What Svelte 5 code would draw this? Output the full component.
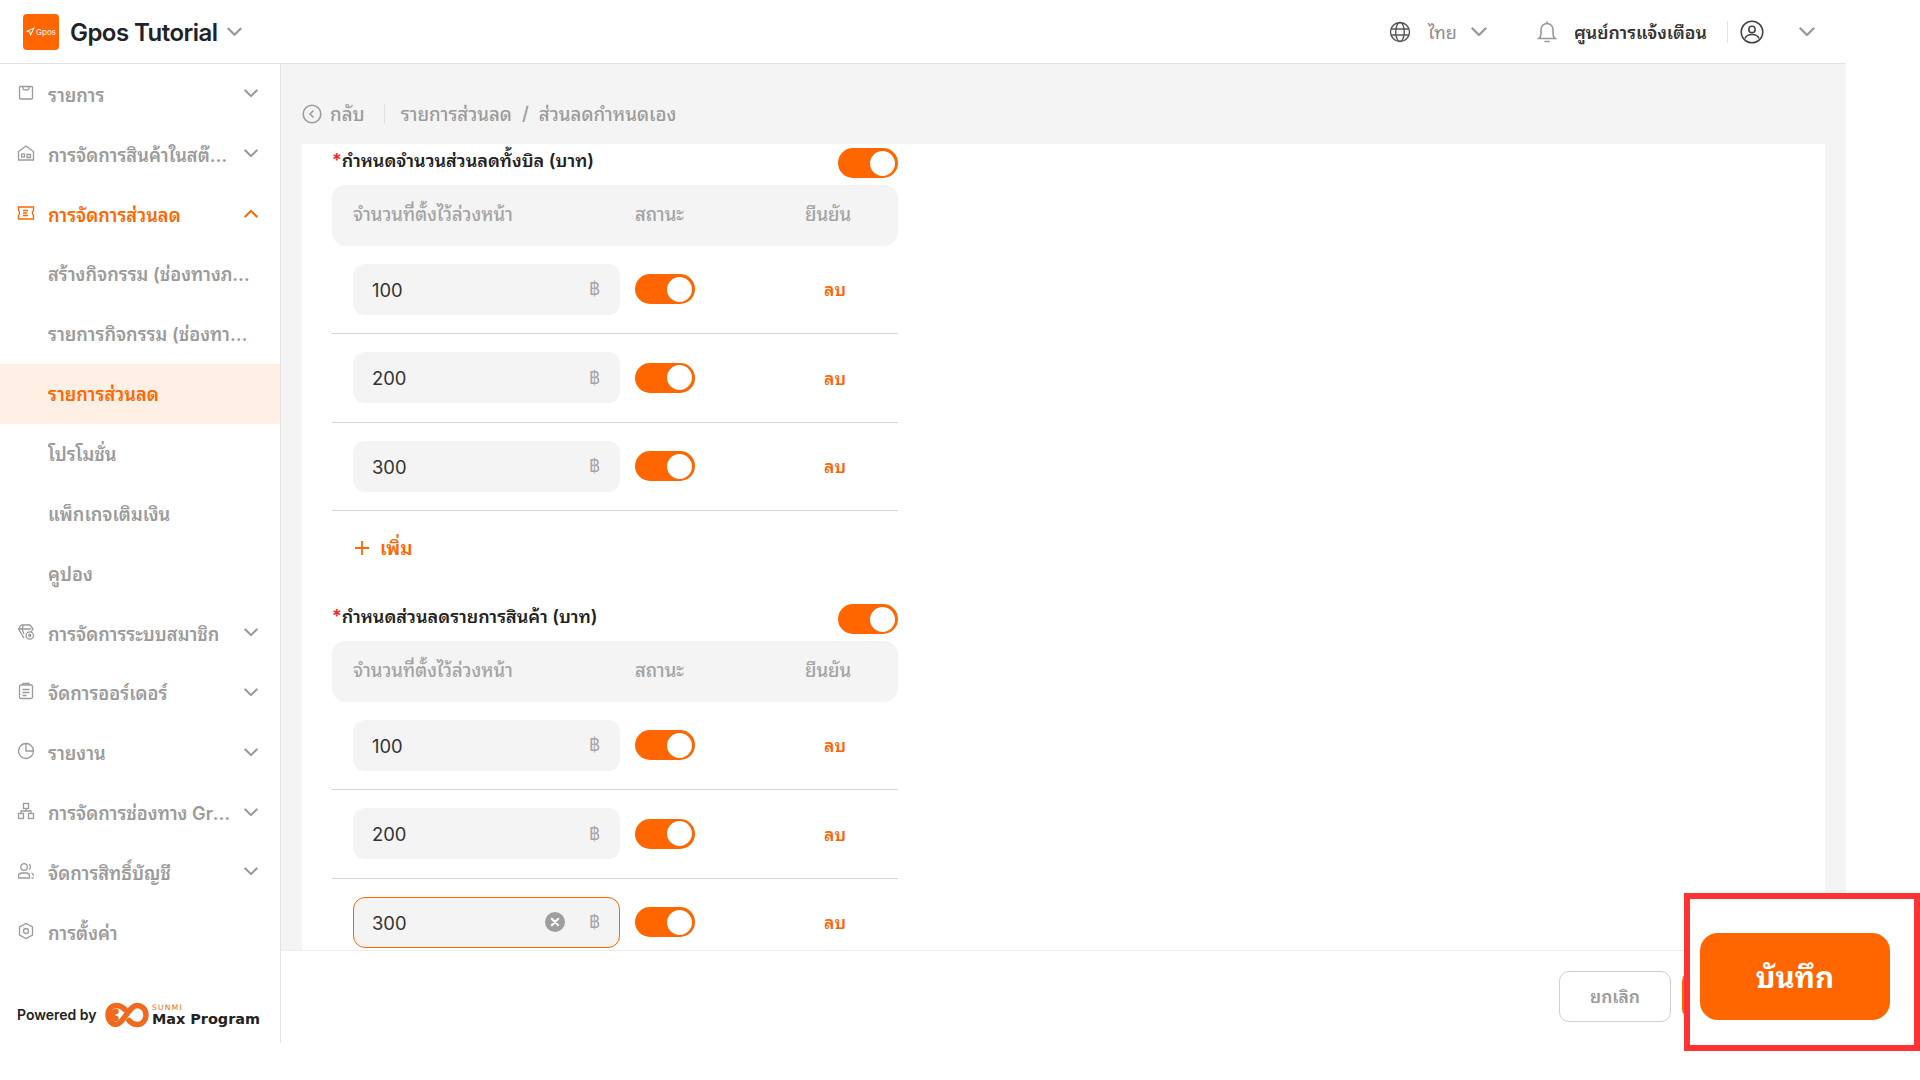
<script>
  const icons = {
    box: '<rect x="2.500" y="2.500" width="13" height="12.500" rx="1"/><path d="M6 2.500v2.200c0 1.700 6 1.700 6 0V2.500"/>',
    store: '<path d="M1.500 16V7.500L9 2l7.500 5.500V16z"/><rect x="4.500" y="10" width="3" height="3"/><path d="M10 10.500h3.500v3H10z"/>',
    ticket: '<path d="M1.500 3h15v3.500c-1.500.6-1.500 3.900 0 5V15h-15v-3.500c1.300-.8 1.300-4 0-5z"/><path d="M6 6.500h5M6 9h4M6 11.500h5"/>',
    gem: '<path d="M4 2h9l3 4-2 3M4 2 1.500 6 7 15M1.500 6H14M6.500 2 5 6l2 5"/><circle cx="12.800" cy="12.500" r="3.700"/><circle cx="12.800" cy="12.500" r="1"/>',
    clip: '<rect x="2.500" y="3" width="13" height="13.500" rx="1.500"/><path d="M6 3V1.500h6V3M5.500 7.500h7M5.500 10.500h7M5.500 13.500h4"/>',
    pie: '<path d="M9 1.500a7.500 7.500 0 1 0 7.500 7.500H9z"/><path d="M9 1.500a7.500 7.500 0 0 1 7.500 7.500"/>',
    tree: '<rect x="6.500" y="1.500" width="5" height="5"/><rect x="1.500" y="11.500" width="5" height="5"/><rect x="11.500" y="11.500" width="5" height="5"/><path d="M9 6.500V9M4 11.500V9h10v2.500"/>',
    users: '<circle cx="7" cy="5" r="3.300"/><path d="M1.500 16v-1.500c0-2 1.500-3.500 3.500-3.500h4c2 0 3.500 1.500 3.500 3.500V16zM12 2.500c2 .5 2 4 0 5M14.500 11c1.300.5 2 1.500 2 3M14.500 16h2"/>',
    gear: '<path d="M9 1.500 15.500 5v8L9 16.500 2.500 13V5z"/><circle cx="9" cy="9" r="2.500"/>'
  };
  const menu = [
    { t: 'รายการ', i: 'box', c: 'down' },
    { t: 'การจัดการสินค้าในสต๊อกของร้าน', i: 'store', c: 'down' },
    { t: 'การจัดการส่วนลด', i: 'ticket', c: 'up', open: true },
    { t: 'สร้างกิจกรรม (ช่องทางภายนอกร้าน)', sub: true },
    { t: 'รายการกิจกรรม (ช่องทางภายนอก)', sub: true },
    { t: 'รายการส่วนลด', sub: true, on: true },
    { t: 'โปรโมชั่น', sub: true },
    { t: 'แพ็กเกจเติมเงิน', sub: true },
    { t: 'คูปอง', sub: true },
    { t: 'การจัดการระบบสมาชิก', i: 'gem', c: 'down' },
    { t: 'จัดการออร์เดอร์', i: 'clip', c: 'down' },
    { t: 'รายงาน', i: 'pie', c: 'down' },
    { t: 'การจัดการช่องทาง Grab Food', i: 'tree', c: 'down' },
    { t: 'จัดการสิทธิ์บัญชี', i: 'users', c: 'down' },
    { t: 'การตั้งค่า', i: 'gear' }
  ];
  const sections = [
    { title: 'กำหนดจำนวนส่วนลดทั้งบิล (บาท)', rows: [{ v: '100' }, { v: '200' }, { v: '300' }], add: true },
    { title: 'กำหนดส่วนลดรายการสินค้า (บาท)', rows: [{ v: '100' }, { v: '200' }, { v: '300', focus: true }] }
  ];
</script>

{#snippet chev(cls)}
  <svg class="chev {cls}" viewBox="0 0 16 10"><path d="M1.500 1.500 8 8l6.500-6.500" /></svg>
{/snippet}

<div class="shell">
  <header class="top">
    <div class="brand">
      <div class="logo">
        <svg viewBox="0 0 12 12" class="plane"><path d="M10.500 1.500 1.500 5.500l3.500 1.200 1.200 3.800z" /></svg>
        <span>Gpos</span>
      </div>
      <span class="app-name">Gpos Tutorial</span>
      {@render chev('brand-chev')}
    </div>
    <div class="tools">
      <svg class="globe" viewBox="0 0 22 22"><circle cx="11" cy="11" r="9.500" /><ellipse cx="11" cy="11" rx="4.300" ry="9.500" /><path d="M2 8h18M2 14h18" /></svg>
      <span class="lang">ไทย</span>
      {@render chev('lang-chev')}
      <svg class="bell" viewBox="0 0 20 24"><path d="M2 18.500c1.500-1 2-2.500 2-5V9.500a6 6 0 0 1 12 0v4c0 2.500.5 4 2 5z" /><path d="M8 21.500h4" /><path d="M10 3.500V2" /></svg>
      <span class="notice">ศูนย์การแจ้งเตือน</span>
      <i class="vr"></i>
      <svg class="user" viewBox="0 0 24 24"><circle cx="12" cy="12" r="10.800" /><circle cx="12" cy="9.500" r="3.200" /><path d="M5 18.500c1-3 3.500-4 7-4s6 1 7 4" /></svg>
      {@render chev('user-chev')}
    </div>
  </header>

  <div class="body">
    <aside class="side">
      <nav>
        {#each menu as m}
          <div class="item" class:open={m.open} class:sub={m.sub} class:on={m.on}>
            {#if m.i}
              <svg class="ico" viewBox="0 0 18 18">{@html icons[m.i]}</svg>
            {/if}
            <span class="label">{m.t}</span>
            {#if m.c}{@render chev('nav-chev ' + m.c)}{/if}
          </div>
        {/each}
      </nav>
      <div class="powered">
        <span class="pb">Powered by</span>
        <svg class="inf" viewBox="0 0 44 26"><path d="M20 7.500C17 4.500 14.500 3.500 11.500 3.500 6.500 3.500 3 7.500 3 13s3.500 9.500 8 9.500c7 0 13-19 21-19 5 0 9 4 9 9.500s-4 9.500-9 9.500c-3 0-5.500-1-8-4" /><path d="M11 16.500c-2.500 0-3.500-1.500-3.500-3.500s1.500-3.500 3.500-3.500" /></svg>
        <div class="mp">
          <span class="sunmi">SUNMI</span>
          <span class="mpt">Max Program</span>
        </div>
      </div>
    </aside>

    <main class="main">
      <div class="crumbs">
        <svg class="back" viewBox="0 0 20 20"><circle cx="10" cy="10" r="8.800" /><path d="M11.500 6.500 8 10l3.500 3.500" /></svg>
        <span class="b-t">กลับ</span>
        <i class="b-vr"></i>
        <span>รายการส่วนลด</span>
        <span class="slash">/</span>
        <span>ส่วนลดกำหนดเอง</span>
      </div>
      <div class="card">
        {#each sections as s}
          <section class="sec">
            <div class="sec-head">
              <span class="sec-title"><b>*</b>{s.title}</span>
              <span class="toggle"><i></i></span>
            </div>
            <div class="thead">
              <span>จำนวนที่ตั้งไว้ล่วงหน้า</span>
              <span>สถานะ</span>
              <span>ยืนยัน</span>
            </div>
            {#each s.rows as r}
              <div class="row">
                <div class="input" class:focus={r.focus}>
                  <span class="val">{r.v}</span>
                  {#if r.focus}
                    <svg class="clear" viewBox="0 0 20 20"><circle cx="10" cy="10" r="10" /><path d="M6.800 6.800l6.400 6.400M13.200 6.800l-6.400 6.400" /></svg>
                  {/if}
                  <span class="baht">฿</span>
                </div>
                <span class="toggle"><i></i></span>
                <span class="del">ลบ</span>
              </div>
            {/each}
            {#if s.add}
              <div class="add">
                <svg viewBox="0 0 16 16"><path d="M8 1v14M1 8h14" /></svg>
                <span>เพิ่ม</span>
              </div>
            {/if}
          </section>
        {/each}
      </div>
      <footer class="foot">
        <button class="cancel">ยกเลิก</button>
        <button class="save-under" aria-label="บันทึก"></button>
      </footer>
    </main>
  </div>

  <div class="callout">
    <button class="save">บันทึก</button>
  </div>
</div>

<style>
  :global(body) {
    margin: 0;
    background: #fff;
  }
  .shell {
    width: 1846px;
    height: 1043px;
    display: flex;
    flex-direction: column;
    font-family: Inter, "Noto Sans Thai Looped", "Sukhumvit Set", Thonburi, Loma, Garuda, Waree, "Noto Sans Thai", "Noto Sans", "Liberation Sans", sans-serif;
    color: #1f2329;
  }
  .top {
    flex: none;
    height: 63px;
    border-top: 1px solid #fbdfcc;
    border-bottom: 1px solid #e3e3e3;
    display: flex;
    align-items: center;
    justify-content: space-between;
    padding: 0 31px 0 23px;
    margin-top: -1px;
  }
  .brand, .tools { display: flex; align-items: center; }
  .logo {
    width: 36px;
    height: 36px;
    background: #ff6600;
    border-radius: 4px;
    color: #fff;
    font-size: 8px;
    display: flex;
    align-items: center;
    justify-content: center;
    gap: 1px;
  }
  .plane { width: 9px; height: 9px; fill: none; stroke: #fff; stroke-width: 1.400; }
  .app-name { margin-left: 11px; margin-top: 1px; font-size: 24px; font-weight: 600; letter-spacing: -.55px; }
  .chev { fill: none; stroke: #999; stroke-width: 2.400; stroke-linecap: round; stroke-linejoin: round; display: block; flex: none; }
  .brand-chev { width: 15px; height: 10px; margin-left: 10px; }
  .globe { width: 22px; height: 22px; fill: none; stroke: #555; stroke-width: 1.400; }
  .lang { margin-left: 17px; margin-bottom: 1px; font-size: 18px; color: #8c8c8c; width: 29px; }
  .lang-chev { width: 16px; height: 10px; margin-left: 14px; }
  .bell { width: 20px; height: 24px; margin-left: 50px; fill: none; stroke: #999; stroke-width: 1.600; stroke-linecap: round; }
  .notice { margin-left: 17px; margin-bottom: 1px; width: 129px; font-size: 17.800px; font-weight: 600; color: #333; white-space: nowrap; }
  .vr { width: 1px; height: 22px; margin-left: 24px; background: #e3e3e3; }
  .user { width: 24px; height: 24px; margin-left: 12px; fill: none; stroke: #444; stroke-width: 1.500; }
  .user-chev { width: 16px; height: 10px; margin-left: 35px; }

  .body { flex: 1; display: flex; min-height: 0; }
  .side {
    flex: none;
    width: 280px;
    border-right: 1px solid #e3e3e3;
    display: flex;
    flex-direction: column;
    justify-content: space-between;
  }
  nav { padding-top: 1px; }
  .item {
    height: 59.850px;
    display: flex;
    align-items: center;
    padding: 0 22px 0 17px;
    color: #9b9b9b;
    font-size: 18.200px;
    font-weight: 600;
  }
  .ico { width: 18px; height: 18px; flex: none; margin-right: 13px; margin-top: -4px; fill: none; stroke: #9b9b9b; stroke-width: 1.300; }
  .label { flex: 1; min-width: 0; white-space: nowrap; overflow: hidden; text-overflow: ellipsis; padding-bottom: 3px; }
  .item.sub { padding-left: 48px; padding-right: 26px; }
  .item.open, .item.on { color: #ff6600; }
  .item.open .ico { stroke: #ff6600; }
  .item.on { background: #ffefe5; }
  .nav-chev { width: 14px; height: 9px; margin-left: 8px; margin-top: -2px; }
  .nav-chev.up { transform: rotate(180deg); stroke: #ff6600; }
  .powered { display: flex; align-items: center; padding: 0 0 15px 17px; }
  .pb { font-size: 14px; font-weight: 600; width: 87px; white-space: nowrap; color: #222; margin-top: -1px; }
  .inf { width: 46px; height: 26px; fill: none; stroke: #f0691e; stroke-width: 5.500; stroke-linecap: round; flex: none; }
  .mp { display: flex; flex-direction: column; margin-left: 2px; line-height: 1; }
  .sunmi { font-size: 7.500px; color: #f0691e; letter-spacing: 1.300px; font-family: "DejaVu Sans", sans-serif; }
  .mpt { font-family: "DejaVu Sans", sans-serif; font-weight: 700; font-size: 14.400px; color: #222; white-space: nowrap; margin-top: 1px; }

  .main { flex: 1; min-width: 0; display: flex; flex-direction: column; background: #f4f4f4; }
  .crumbs {
    flex: none;
    height: 60px;
    padding: 20px 0 0 21px;
    display: flex;
    align-items: center;
    font-size: 18.600px;
    color: #9b9b9b;
    font-weight: 500;
  }
  .crumbs span { margin-bottom: 2px; }
  .back { width: 20px; height: 20px; fill: none; stroke: #9b9b9b; stroke-width: 1.600; margin-right: 8px; }
  .b-t { margin-right: 19px; }
  .b-vr { width: 1px; height: 20px; background: #e0e0e0; margin-right: 16px; }
  .slash { margin: 0 10px; }
  .card {
    flex: 1;
    min-height: 0;
    overflow: hidden;
    margin: 0 21px;
    padding: 4px 0 0 30px;
    background: #fff;
  }
  .sec { width: 566px; }
  .sec-head { height: 30px; margin-bottom: 7px; display: flex; align-items: center; justify-content: space-between; }
  .sec-title { font-size: 18px; font-weight: 600; color: #222; margin-bottom: 8px; }
  .sec-title b { color: #f5222d; font-weight: 600; }
  .toggle {
    width: 60px;
    height: 30px;
    border-radius: 15px;
    background: #ff6600;
    display: flex;
    align-items: center;
    justify-content: flex-end;
    padding-right: 3px;
    box-sizing: border-box;
    flex: none;
  }
  .toggle i { width: 25px; height: 25px; border-radius: 50%; background: #fff; display: block; }
  .thead, .row {
    display: grid;
    grid-template-columns: 267px 155px 1fr;
    column-gap: 15px;
    align-items: center;
    padding-left: 21px;
  }
  .thead {
    height: 60.500px;
    background: #f4f4f4;
    border-radius: 14px;
    font-size: 18.400px;
    font-weight: 500;
    color: #a3a3a3;
  }
  .thead span { padding-bottom: 5px; }
  .row { height: 87.500px; border-bottom: 1px solid #d4d4d4; }
  .input {
    height: 51px;
    box-sizing: border-box;
    background: #f4f4f4;
    border-radius: 12px;
    display: flex;
    align-items: center;
    padding: 0 19px;
    font-size: 18.400px;
    color: #333;
  }
  .input.focus { border: 1px solid #ff6600; padding: 0 18px; }
  .val { flex: 1; padding-top: 1px; }
  .clear { width: 20px; height: 20px; margin-right: 25px; }
  .clear circle { fill: #9e9e9e; }
  .clear path { stroke: #fff; stroke-width: 2.200; stroke-linecap: round; }
  .baht { color: #a6a6a6; font-size: 17px; margin-left: -1px; margin-right: 1px; }
  .del { color: #ff6600; font-size: 17.500px; font-weight: 600; padding-left: 19px; padding-bottom: 2px; }
  .add { height: 74px; margin-bottom: 19px; display: flex; align-items: center; padding-left: 22px; color: #ff6600; font-size: 19px; font-weight: 600; }
  .add span { padding-bottom: 4px; }
  .add svg { width: 16px; height: 16px; fill: none; stroke: #ff6600; stroke-width: 1.800; margin-right: 10px; }
  .foot {
    flex: none;
    height: 93px;
    box-sizing: border-box;
    background: #fff;
    border-top: 1px solid #ececec;
    display: flex;
    align-items: flex-start;
    justify-content: flex-end;
    gap: 11px;
    padding: 20px 21px 0 0;
  }
  button { font-family: inherit; cursor: pointer; }
  .cancel {
    width: 112px;
    height: 51px;
    background: #fff;
    border: 1px solid #cfcfcf;
    border-radius: 10px;
    color: #9b9b9b;
    font-size: 17.500px;
    font-weight: 600;
    padding: 0 0 3px;
  }
  .save-under {
    width: 143px;
    height: 48px;
    background: #ff6600;
    border: 0;
    border-radius: 10px;
  }
  .callout {
    position: absolute;
    left: 1684px;
    top: 893px;
    width: 236px;
    height: 158px;
    box-sizing: border-box;
    background: #fff;
    border: 6px solid #ff3333;
    padding: 34px 0 0 10px;
  }
  .save {
    width: 190px;
    height: 87px;
    display: block;
    background: #ff6600;
    color: #fff;
    border: 0;
    border-radius: 18px;
    font-size: 29.500px;
    font-weight: 700;
    padding: 0 0 4px;
  }
</style>
